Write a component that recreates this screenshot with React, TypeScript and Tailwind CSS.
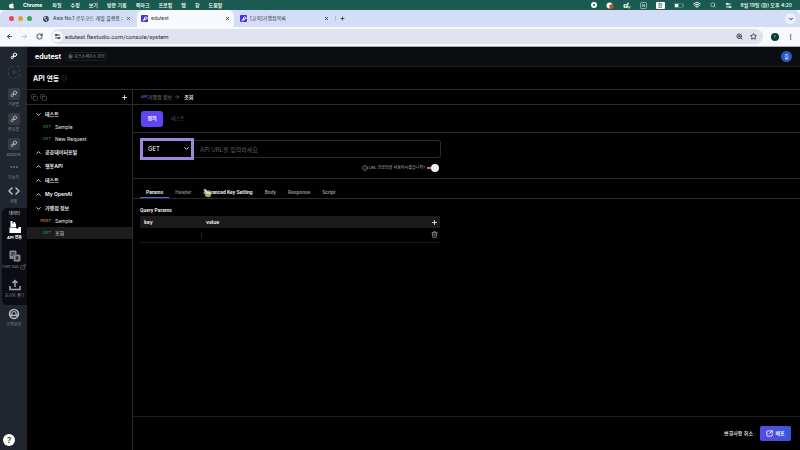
import type { ReactNode } from 'react';
import {
  ArrowLeft,
  ArrowRight,
  ChevronDown,
  ChevronUp,
  Code,
  Copy,
  Ellipsis,
  EllipsisVertical,
  ExternalLink,
  Info,
  Plus,
  RotateCw,
  Search,
  Settings,
  Settings2,
  SquareArrowOutUpRight,
  Star,
  Trash2,
  Wifi,
  X,
  ZoomIn,
} from 'lucide-react';
import { FaApple, FaGlobeAmericas } from 'react-icons/fa';

const menus = ['파일', '수정', '보기', '방문 기록', '북마크', '프로필', '탭', '창', '도움말'];

const tree = [
  {
    name: '테스트',
    open: true,
    items: [
      { method: 'GET', name: 'Sample' },
      { method: 'GET', name: 'New Request' },
    ],
  },
  { name: '공공데이터포털', open: false, items: [] },
  { name: '챗봇API', open: false, items: [] },
  { name: '테스트', open: false, items: [] },
  { name: 'My OpenAI', open: false, items: [] },
  {
    name: '가맹점 정보',
    open: true,
    items: [
      { method: 'POST', name: 'Sample' },
      { method: 'GET', name: '조회', active: true },
    ],
  },
];

const requestTabs = [
  { name: 'Params', className: 'border-[#4d68e0] text-gray-200' },
  { name: 'Header', className: 'border-transparent text-[#777]' },
  { name: 'Advanced Key Setting', className: 'border-transparent text-gray-200' },
  { name: 'Body', className: 'border-transparent text-[#8a8a8a]' },
  { name: 'Response', className: 'border-transparent text-[#8a8a8a]' },
  { name: 'Script', className: 'border-transparent text-[#8a8a8a]' },
];

function LinkMark({ className }: { className: string }) {
  return (
    <svg viewBox="0 0 24 24" fill="none" stroke="currentColor" strokeWidth="3" strokeLinecap="round" className={className}>
      <circle cx="15" cy="8" r="5" />
      <path d="M10 8v8.500a3.300 3.300 0 1 1-3.300-3.300H15" />
    </svg>
  );
}

function Favicon() {
  return (
    <span className="flex h-[7px] w-[7px] shrink-0 items-center justify-center rounded-[1px] bg-[#4630d8]">
      <LinkMark className="h-[6px] w-[6px] text-white" />
    </span>
  );
}

function MenuBar() {
  return (
    <div className="flex h-[10px] items-center bg-[#1b5a50] pr-2 pl-2 text-[5px] font-medium text-white">
      <FaApple className="h-[7px] w-[7px]" />
      <span className="ml-2 font-bold">Chrome</span>
      <nav className="ml-[10px] flex gap-[9px] whitespace-nowrap">
        {menus.map((menu) => (
          <span key={menu}>{menu}</span>
        ))}
      </nav>
      <div className="ml-auto flex items-center gap-[9px] whitespace-nowrap">
        <span className="h-[6px] w-[6px] rounded-full border-2 border-white" />
        <svg viewBox="0 0 16 14" className="h-[7px] w-2">
          <circle cx="7" cy="7" r="6" fill="#fff" />
          <circle cx="11" cy="9" r="4.5" fill="#d8402c" />
        </svg>
        <svg viewBox="0 0 16 14" className="h-[7px] w-2">
          <rect x="1" y="4" width="9" height="8" rx="2" fill="#dfe9e6" />
          <circle cx="10" cy="3" r="2" fill="#dfe9e6" />
          <path d="M3.500 6.500h4M5.500 6.500v4" stroke="#1b5a50" strokeWidth="1.300" />
          <circle cx="12.500" cy="10" r="3" fill="#7bc043" />
        </svg>
        <svg viewBox="0 0 14 14" fill="none" stroke="#fff" className="h-[7px] w-[7px]">
          <rect x="1" y="1" width="12" height="12" rx="2" />
          <path d="M5 10V4l4 6V4" />
        </svg>
        <span className="flex h-[7px] w-[9px] items-center justify-center rounded-[1px] bg-white text-[#1b5a50]">한</span>
        <svg viewBox="0 0 20 10" className="h-[5px] w-[10px]">
          <rect x="0.500" y="0.500" width="17" height="9" rx="2.500" fill="none" stroke="#9dbab5" />
          <rect x="2" y="2" width="7" height="6" rx="1" fill="#fff" />
          <path d="M19 3.500v3" stroke="#9dbab5" strokeWidth="1.500" />
        </svg>
        <Wifi className="h-2 w-2" strokeWidth={3} />
        <Search className="h-[6px] w-[6px]" strokeWidth={2} />
        <Settings2 className="h-[7px] w-[7px]" strokeWidth={3} />
        <span>8월 19일 (화) 오후 4:20</span>
      </div>
    </div>
  );
}

function BrowserBar() {
  return (
    <div className="border-b border-[#a9abb0] bg-[#f7f9fe] text-[#30343c]">
      <div className="flex h-[17px] items-stretch rounded-t-md bg-[#d3ddf6] text-[5px]">
        <div className="flex w-[137px] shrink-0 items-center">
          <div className="ml-[9px] flex gap-1">
            <span className="h-[5px] w-[5px] rounded-full bg-[#e5484d]" />
            <span className="h-[5px] w-[5px] rounded-full bg-[#e2a336]" />
            <span className="h-[5px] w-[5px] rounded-full bg-[#36a846]" />
          </div>
          <FaGlobeAmericas className="ml-[11px] h-[6px] w-[6px] shrink-0" />
          <span className="ml-1 flex-1 whitespace-nowrap">Asia No.1 로우코드 개발 플랫폼 :</span>
          <button aria-label="탭 닫기" className="mr-[6px]">
            <X className="h-[5px] w-[5px]" strokeWidth={3} />
          </button>
        </div>
        <div className="flex w-[97px] shrink-0 items-center gap-[3px] rounded-t-md bg-[#f7f9fe] px-1">
          <Favicon />
          <span className="flex-1">edutest</span>
          <button aria-label="탭 닫기">
            <X className="h-[5px] w-[5px]" strokeWidth={4} />
          </button>
        </div>
        <div className="flex w-[101px] shrink-0 items-center gap-[3px] pr-[6px] pl-[6px]">
          <Favicon />
          <span className="flex-1">[교육]가맹점목록</span>
          <button aria-label="탭 닫기">
            <X className="h-[5px] w-[5px]" strokeWidth={4} />
          </button>
        </div>
        <button aria-label="새 탭" className="my-[6px] border-l border-[#a8bcec] pl-1">
          <Plus className="h-[5px] w-[5px]" strokeWidth={4} />
        </button>
        <button aria-label="탭 검색" className="mt-[3px] mr-1 ml-auto flex h-[11px] w-[11px] items-center justify-center rounded-full bg-[#eaf0fd]">
          <ChevronDown className="h-[6px] w-[6px]" strokeWidth={4} />
        </button>
      </div>
      <div className="flex h-[19px] items-center gap-2 px-[6px]">
        <button aria-label="뒤로">
          <ArrowLeft className="h-[7px] w-[7px]" strokeWidth={3} />
        </button>
        <button aria-label="앞으로" className="text-[#9ba0aa]">
          <ArrowRight className="h-[7px] w-[7px]" strokeWidth={2} />
        </button>
        <button aria-label="새로고침">
          <RotateCw className="h-[7px] w-[7px]" strokeWidth={3} />
        </button>
        <div className="flex h-[15px] flex-1 items-center rounded-full bg-[#dfe3ef] px-px">
          <span className="flex h-[11px] w-[11px] items-center justify-center rounded-full bg-[#f7f9fe]">
            <Settings2 className="h-[7px] w-[7px]" strokeWidth={3} />
          </span>
          <input
            aria-label="주소"
            defaultValue="edutest.flextudio.com/console/system"
            className="ml-[2px] min-w-0 flex-1 bg-transparent font-[Roboto,sans-serif] text-[6px] text-[#22262e] outline-none"
          />
          <ZoomIn className="mr-[7px] h-[7px] w-[7px]" strokeWidth={3} />
          <Star className="mr-[5px] h-[7px] w-[7px]" strokeWidth={3} />
        </div>
        <span className="flex h-2 w-2 items-center justify-center rounded-full bg-[#073d33] text-[5px] text-[#8fd0a8]">r</span>
        <EllipsisVertical className="h-2 w-[7px]" strokeWidth={2} />
      </div>
    </div>
  );
}

function RailItem({ label, active, children }: { label: ReactNode; active?: boolean; children: ReactNode }) {
  return (
    <a
      href="#"
      className={`flex w-full flex-col items-center gap-px text-[4px] leading-[8px] whitespace-nowrap ${active ? 'font-bold text-white' : 'text-[#858a91]'}`}
    >
      <span className="flex h-3 items-center justify-center">{children}</span>
      <span className="flex h-2 items-center gap-px">{label}</span>
    </a>
  );
}

function AppTile() {
  return (
    <span className="flex h-3 w-3 items-center justify-center rounded-[2px] bg-[#383c42]">
      <LinkMark className="h-2 w-2 text-[#a9adb2]" />
    </span>
  );
}

function Rail() {
  return (
    <aside className="flex w-[27px] shrink-0 flex-col bg-[#20262d]">
      <div className="flex h-[18px] items-center justify-center text-white">
        <LinkMark className="h-2 w-2" />
      </div>
      <button aria-label="앱 추가" className="mx-auto mt-px flex h-3 w-3 items-center justify-center rounded-[3px] border border-dashed border-[#3a4047] text-[#50565e]">
        <Plus className="h-[6px] w-[6px]" />
      </button>
      <div className="mt-[10px] flex flex-col gap-1">
        <RailItem label="기본앱">
          <AppTile />
        </RailItem>
        <RailItem label="튜토앱">
          <AppTile />
        </RailItem>
        <RailItem label="edutest">
          <AppTile />
        </RailItem>
      </div>
      <div className="mt-[2px] mb-[2px] flex flex-col gap-[3px]">
        <RailItem label="더보기">
          <Ellipsis className="h-[10px] w-[10px]" strokeWidth={2} />
        </RailItem>
        <RailItem label="개발">
          <Code className="h-3 w-3 text-[#b6babf]" strokeWidth={3} />
        </RailItem>
      </div>
      <div className="ml-[2px] flex flex-col gap-2 rounded-l-[5px] bg-[#0b0d12] pb-[5px]">
        <div className="flex flex-col gap-[3px] pt-[2px]">
          <span className="text-center text-[4px] leading-[8px] text-gray-200">데이터</span>
          <RailItem label="API 연동" active>
            <svg viewBox="0 0 24 24" fill="currentColor" className="h-3 w-3">
              <path d="M3 0h4v5h2V2h3v3h2v7H3z" />
              <path d="M1 13h12l4 3 3-4h4v12H1z" />
            </svg>
          </RailItem>
        </div>
        <RailItem label={<>Flex SQL<ExternalLink className="h-[6px] w-[6px]" /></>}>
          <svg viewBox="0 0 24 24" fill="none" stroke="currentColor" strokeWidth="2" className="h-3 w-3">
            <path d="M2 2h12v6H8v9H2z" fill="currentColor" />
            <path d="M4 6h8M4 10h4" stroke="#0b0d12" />
            <rect x="10" y="10" width="12" height="12" rx="1" fill="currentColor" />
            <path d="M13 14h6M13 18h6M16 14v4" stroke="#0b0d12" />
          </svg>
        </RailItem>
        <RailItem label="호스팅 폴더">
          <svg viewBox="0 0 24 24" fill="none" stroke="#a3a7ac" strokeWidth="3" className="h-3 w-3">
            <path d="M12 16V4M7 8l5-5 5 5M2 14v7h20v-7" />
          </svg>
        </RailItem>
      </div>
      <div className="mt-[3px]">
        <RailItem label="고객관리">
          <svg viewBox="0 0 24 24" className="h-3 w-3">
            <circle cx="12" cy="12" r="10.500" fill="#b3b7bc" />
            <path d="M6 13v-2a6 6 0 0 1 12 0v2" fill="none" stroke="#20262d" strokeWidth="2" />
            <circle cx="12" cy="11" r="3" fill="#20262d" />
            <path d="M6 19c1-4 11-4 12 0" fill="#20262d" />
          </svg>
        </RailItem>
      </div>
      <button aria-label="도움말" className="mt-auto mb-1 ml-[3px] flex h-3 w-3 items-center justify-center rounded-full bg-white text-[8px] font-medium text-[#222]">
        ?
      </button>
    </aside>
  );
}

function ApiTree() {
  return (
    <div className="w-[106px] shrink-0 border-r border-[#2b2b2b]">
      <div className="flex h-[15px] items-center gap-[2px] border-b border-[#2b2b2b] px-1 text-[#666]">
        <Copy className="h-[7px] w-[7px]" />
        <Copy className="h-[7px] w-[7px]" />
        <button aria-label="추가" className="ml-auto text-gray-200">
          <Plus className="h-[7px] w-[7px]" strokeWidth={3} />
        </button>
      </div>
      <ul className="pt-[2px]">
        {tree.map((group, i) => (
          <li key={i}>
            <button className="flex h-[14px] w-full items-center gap-[3px] pl-2 text-[5px] font-bold text-gray-200">
              {group.open ? <ChevronDown className="h-[7px] w-[7px]" strokeWidth={3} /> : <ChevronUp className="h-[7px] w-[7px]" strokeWidth={3} />}
              {group.name}
            </button>
            {group.open && (
              <ul>
                {group.items.map((item) => (
                  <li key={item.name}>
                    <a href="#" className={`flex h-3 items-center gap-1 text-[5px] text-gray-200 ${item.active ? 'bg-[#1c1c1c]' : ''}`}>
                      <span className={`w-6 text-right text-[4px] font-medium ${item.method === 'POST' ? 'text-[#c98a35]' : 'text-[#23865b]'}`}>
                        {item.method}
                      </span>
                      {item.name}
                    </a>
                  </li>
                ))}
              </ul>
            )}
          </li>
        ))}
      </ul>
    </div>
  );
}

function UrlForm() {
  return (
    <section className="border-b border-[#2b2b2b] px-[7px] pt-[5px] pb-[6px]">
      <div className="flex h-[22px] max-w-[301px] items-center">
        <div className="relative h-full w-[54px] shrink-0">
          <select
            aria-label="메서드"
            className="block h-full w-full appearance-none border-[3px] border-[#9f86df] bg-black pl-[5px] text-[6px] leading-none text-white outline-none"
          >
            <option>GET</option>
            <option>POST</option>
          </select>
          <ChevronDown className="pointer-events-none absolute top-[7px] right-1 h-[7px] w-[7px] text-white" strokeWidth={3} />
        </div>
        <input
          aria-label="API URL"
          placeholder="API URL을 입력하세요"
          className="h-[18px] min-w-0 flex-1 rounded-r-[3px] border border-l-0 border-[#2b2b2b] bg-transparent pl-[6px] text-[6px] text-white outline-none placeholder:text-[#5f5f5f]"
        />
      </div>
      <label className="mt-1 flex h-2 max-w-[299px] items-center justify-end gap-px text-[4px] text-[#b5b5b5]">
        <Info className="h-[6px] w-[6px]" />
        URL 인코딩을 사용하시겠습니까?
        <input
          type="checkbox"
          defaultChecked
          className="ml-px flex h-1 w-3 appearance-none items-center justify-end bg-[linear-gradient(#d66a86,#d66a86)] bg-[length:100%_2px] bg-center bg-no-repeat before:h-2 before:w-2 before:shrink-0 before:rounded-full before:bg-[#eeeeee]"
        />
      </label>
    </section>
  );
}

function Pointer() {
  return (
    <svg viewBox="0 0 18 20" className="pointer-events-none absolute top-[9px] left-[6px] h-[10px] w-[9px]">
      <circle cx="10" cy="12" r="6.500" fill="#8fbf3f" />
      <path d="M1 3l4-1 4 4 5 1 3 3-3 7-4 1-5-7z" fill="#d9dc9a" stroke="#7a4fa8" strokeWidth="1.200" />
      <path d="M7 12l3 5 4-1 1-4z" fill="#8fbf3f" />
    </svg>
  );
}

function RequestPanel() {
  return (
    <section>
      <div className="flex h-5 border-b border-[#2b2b2b] px-[7px] font-[Roboto,sans-serif] text-[5px] font-bold">
        {requestTabs.map((tab) => (
          <button key={tab.name} className={`relative border-b px-[6px] pt-[9px] whitespace-nowrap ${tab.className}`}>
            {tab.name}
            {tab.name === 'Advanced Key Setting' && <Pointer />}
          </button>
        ))}
      </div>
      <div className="max-w-[307px] pt-[6px] pl-[7px]">
        <h2 className="font-[Roboto,sans-serif] text-[5px] leading-[10px] font-bold text-gray-200">Query Params</h2>
        <table className="mt-px w-full text-left text-[5px] text-gray-200">
          <thead>
            <tr className="h-3 bg-[#1b1b1b]">
              <th className="w-[62px] py-0 pl-1">key</th>
              <th className="py-0 pl-1">value</th>
              <th className="w-[9px] py-0">
                <button aria-label="행 추가" className="block">
                  <Plus className="h-[7px] w-[7px]" strokeWidth={3} />
                </button>
              </th>
            </tr>
          </thead>
          <tbody>
            <tr className="h-[14px] border-b border-[#181818]">
              <td className="py-0">
                <input aria-label="key" className="block h-[6px] w-full border-r border-[#222] bg-transparent outline-none" />
              </td>
              <td className="py-0 pl-1">
                <input aria-label="value" className="block h-[6px] w-full bg-transparent outline-none" />
              </td>
              <td className="py-0">
                <button aria-label="행 삭제" className="block text-[#b5b5b5]">
                  <Trash2 className="h-[7px] w-[7px]" strokeWidth={2} />
                </button>
              </td>
            </tr>
          </tbody>
        </table>
      </div>
    </section>
  );
}

export default function App() {
  return (
    <div className="flex min-h-screen flex-col bg-[#1b5a50] font-[Inter,'Noto_Sans_CJK_KR',sans-serif] leading-none">
      <MenuBar />
      <BrowserBar />
      <div className="flex flex-1 bg-black">
        <Rail />
        <div className="flex min-w-0 flex-1 flex-col">
          <header className="flex h-5 items-center border-b border-[#1d1f23] bg-[#0b0d11] pr-2 pl-2">
            <span className="text-[7px] font-bold text-white">edutest</span>
            <button className="ml-1 flex items-center gap-px rounded-full border border-[#1d1f23] px-[2px] py-px text-[4px] text-[#8b8e93]">
              <Settings className="h-[5px] w-[5px]" strokeWidth={3} />
              워크스페이스 관리
            </button>
            <span className="ml-auto flex h-[11px] w-[11px] items-center justify-center rounded-full bg-[#2a56c4] text-[5px] text-white">플</span>
          </header>
          <div className="flex h-[23px] items-center gap-[2px] border-b border-[#2b2b2b] pl-[6px]">
            <h1 className="text-[7px] font-bold text-gray-100">API 연동</h1>
            <Info className="h-[6px] w-[6px] text-[#3a3a3a]" />
          </div>
          <div className="flex flex-1">
            <ApiTree />
            <main className="flex min-w-0 flex-1 flex-col">
              <div className="flex h-[15px] items-center border-b border-[#2b2b2b] pl-2 text-[5px] text-[#8a8a8a]">
                <span className="text-[4px] font-bold text-[#5a48d8] italic">API</span>
                가맹점 정보
                <ArrowRight className="ml-[2px] h-[6px] w-[6px]" />
                <b className="ml-1 text-gray-200">조회</b>
              </div>
              <div className="flex h-7 items-center border-b border-[#2b2b2b] pl-2">
                <button className="h-4 w-[22px] rounded-[3px] bg-[#6144f5] text-[5px] font-bold text-white">정의</button>
                <button className="ml-2 text-[5px] text-[#5f5f5f]">테스트</button>
              </div>
              <UrlForm />
              <RequestPanel />
              <footer className="mt-auto flex h-[34px] items-center justify-end gap-[7px] border-t border-[#1d1d1d] pr-[9px] text-[5px] font-medium">
                <button className="text-gray-200">변경사항 취소</button>
                <button className="flex h-[15px] w-[31px] items-center justify-center gap-[2px] rounded-[2px] bg-linear-to-r from-[#5a48e8] to-[#3858d8] text-white">
                  <SquareArrowOutUpRight className="h-[7px] w-[7px]" strokeWidth={3} />
                  배포
                </button>
              </footer>
            </main>
          </div>
        </div>
      </div>
    </div>
  );
}
